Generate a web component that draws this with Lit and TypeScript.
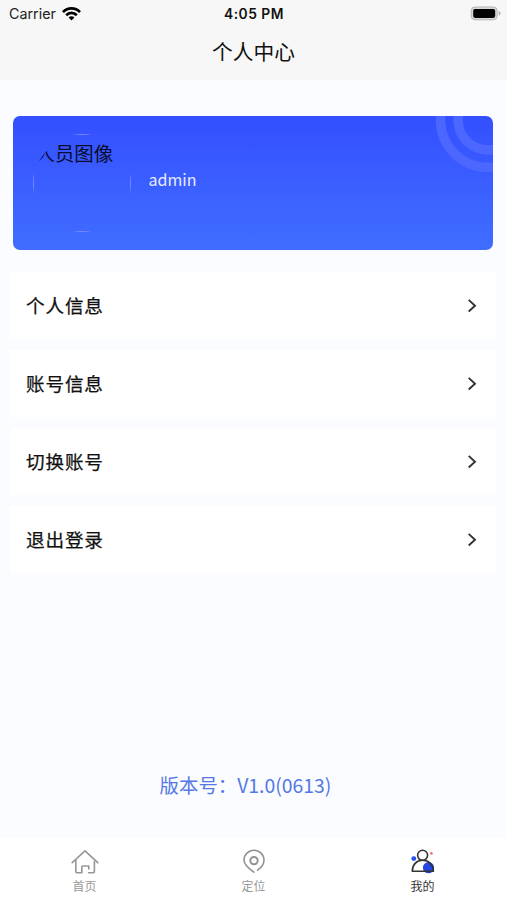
import { LitElement, html, css, svg } from "lit";
import { customElement, property } from "lit/decorators.js";

@customElement("status-bar")
class StatusBar extends LitElement {
  static styles = css`
    :host {
      display: grid;
      grid-template-columns: 1fr auto 1fr;
      align-items: center;
      height: 28px;
      padding: 0 6px 0 9px;
      font: 14.3px/28px Inter, "Liberation Sans", sans-serif;
      color: #222;
    }
    .left { display: flex; align-items: center; gap: 6px; }
    .time { font-weight: 600; font-size: 13.8px; letter-spacing: 0.5px; margin-right: 2px; color: #111; }
    .battery { justify-self: end; }
    .wifi { margin-top: -2px; }
    svg { display: block; }
  `;
  render() {
    return html`
      <div class="left">
        <span>Carrier</span>
        <svg class="wifi" width="19" height="15" viewBox="0 0 19 15">
          <g fill="none" stroke="#000" stroke-width="2.7">
            <path d="M1 6.1C5.8 1.1 13.2 1.1 18 6.1" />
            <path d="M4.2 9.2C7.2 6.1 11.8 6.1 14.8 9.2" />
          </g>
          <path d="M6.6 11.4C8.2 9.8 10.8 9.8 12.4 11.4L9.5 14.4Z" />
        </svg>
      </div>
      <span class="time">4:05 PM</span>
      <svg class="battery" width="31" height="16" viewBox="0 0 31 16">
        <rect x="1.2" y="1" width="26" height="12.8" rx="3.8" fill="#d8d8d8" stroke="#b4b4b4" />
        <rect x="3.2" y="2.9" width="22" height="9" rx="1.8" />
        <path d="M28.6 5.1Q30.6 5.7 30.6 7.3T28.6 9.7Z" fill="#b4b4b4" />
      </svg>
    `;
  }
}

@customElement("profile-card")
class ProfileCard extends LitElement {
  @property() name = "";
  static styles = css`
    :host {
      position: relative;
      display: flex;
      align-items: flex-start;
      gap: 18px;
      box-sizing: border-box;
      height: 134px;
      padding: 18px 20px;
      border-radius: 7px;
      overflow: hidden;
      background: linear-gradient(#344fff, #406dff);
    }
    .avatar { width: 98px; height: 98px; border-radius: 50%; overflow: hidden; }
    .placeholder {
      box-sizing: border-box;
      height: 98px;
      border: 1px solid #7488ff;
      font-size: 19.4px;
      line-height: 27px;
      white-space: nowrap;
      color: #080c2c;
    }
    .alt {
      box-sizing: border-box;
      height: 96px;
      padding: 4px 0 0 2px;
      clip-path: circle(48px at 48px 49px);
    }
    .name { padding-top: 33px; font-size: 16px; line-height: 24px; color: #e6ebff; }
    .rings { position: absolute; top: 0; right: 0; }
  `;
  render() {
    return html`
      <div class="avatar">
        <div class="placeholder"><div class="alt">人员图像</div></div>
      </div>
      <div class="name">${this.name}</div>
      <svg class="rings" width="60" height="60" viewBox="0 0 60 60">
        <g fill="none" stroke="#4b67ff" stroke-width="9.5">
          <circle cx="55" cy="4" r="47.5" />
          <circle cx="55" cy="4" r="30" />
        </g>
      </svg>
    `;
  }
}

@customElement("menu-row")
class MenuRow extends LitElement {
  @property() label = "";
  static styles = css`
    :host {
      display: flex;
      align-items: center;
      justify-content: space-between;
      height: 67px;
      padding: 0 19px 0 16px;
      background: #fff;
      font-size: 18.6px;
      letter-spacing: 0.85px;
      color: #111;
      -webkit-text-stroke: 0.25px #111;
    }
    span { margin-top: -2px; }
    svg { display: block; }
  `;
  render() {
    return html`
      <span>${this.label}</span>
      <svg width="10" height="16" viewBox="0 0 10 16">
        <path d="M1.7 1.9L8 7.7L1.7 13.5" fill="none" stroke="#333" stroke-width="1.9" />
      </svg>
    `;
  }
}

const icons = {
  home: svg`
    <g fill="none" stroke="#969696" stroke-width="1.6" stroke-linejoin="round" stroke-linecap="round">
      <path d="M1.2 14.6L14 2.8L26.8 14.6" />
      <path d="M4.8 12V23Q4.8 24.8 6.6 24.8H10.8V19Q10.8 18 11.8 18H17.8V21" />
      <path d="M23.4 13.5V23Q23.4 24.8 21.6 24.8H17.6" />
    </g>`,
  pin: svg`
    <g fill="none" stroke="#929292" stroke-width="1.6" stroke-linecap="round">
      <path d="M13.8 24.2C9 20.8 4 16.8 4 12A10 9.8 0 0 1 24 12C24 16 21.3 19.6 17.6 22.2" />
      <circle cx="14" cy="12.6" r="3.7" stroke-width="2" />
    </g>`,
  user: svg`
    <circle cx="19.5" cy="19.7" r="5.6" fill="#2446e6" />
    <g fill="none" stroke="#333" stroke-width="1.6" stroke-linejoin="round">
      <circle cx="13.6" cy="7.3" r="5" />
      <path d="M13.6 12.3C7.4 12.3 3.3 16.8 3.3 23.2H24.4C24.4 16.8 19.8 12.3 13.6 12.3" />
    </g>
    <circle cx="4.8" cy="10.6" r="2.4" fill="#2550f2" />
    <circle cx="22.4" cy="5.4" r="1.4" fill="#ee7272" />`,
};

@customElement("tab-item")
class TabItem extends LitElement {
  @property() label = "";
  @property() icon: keyof typeof icons = "home";
  static styles = css`
    :host {
      display: flex;
      flex-direction: column;
      align-items: center;
      flex: 1;
      padding-top: 10px;
      color: #999;
      font-size: 12px;
      line-height: 18px;
    }
    :host([active]) { color: #333; }
    svg { display: block; margin-bottom: 1px; }
  `;
  render() {
    return html`
      <svg width="28" height="28" viewBox="0 0 28 28">${icons[this.icon]}</svg>
      <span>${this.label}</span>
    `;
  }
}

@customElement("app-root")
class AppRoot extends LitElement {
  static styles = css`
    :host {
      display: flex;
      flex-direction: column;
      height: 900px;
      overflow: hidden;
      background: #fafcff;
      font-family: "Noto Sans CJK SC", sans-serif;
    }
    header { flex: none; height: 80px; background: #f7f7f7; }
    h1 {
      margin: 0;
      padding-top: 8px;
      font-size: 20.7px;
      line-height: 30px;
      font-weight: 400;
      text-align: center;
      color: #111;
    }
    main { flex: 1; display: flex; flex-direction: column; }
    profile-card { margin: 36px 14px 0 12.5px; }
    .menu { display: flex; flex-direction: column; gap: 11px; margin: 22px 11px 0 10px; }
    .version {
      margin: auto 16px 38px 0;
      font-size: 19.4px;
      line-height: 30px;
      text-align: center;
      color: #5478e4;
    }
    nav { flex: none; display: flex; height: 62px; background: #fff; }
  `;
  render() {
    return html`
      <header>
        <status-bar></status-bar>
        <h1>个人中心</h1>
      </header>
      <main>
        <profile-card name="admin"></profile-card>
        <div class="menu">
          ${["个人信息", "账号信息", "切换账号", "退出登录"].map(
            (label) => html`<menu-row label=${label}></menu-row>`
          )}
        </div>
        <div class="version">版本号：V1.0(0613)</div>
      </main>
      <nav>
        <tab-item icon="home" label="首页"></tab-item>
        <tab-item icon="pin" label="定位"></tab-item>
        <tab-item icon="user" label="我的" active></tab-item>
      </nav>
    `;
  }
}
